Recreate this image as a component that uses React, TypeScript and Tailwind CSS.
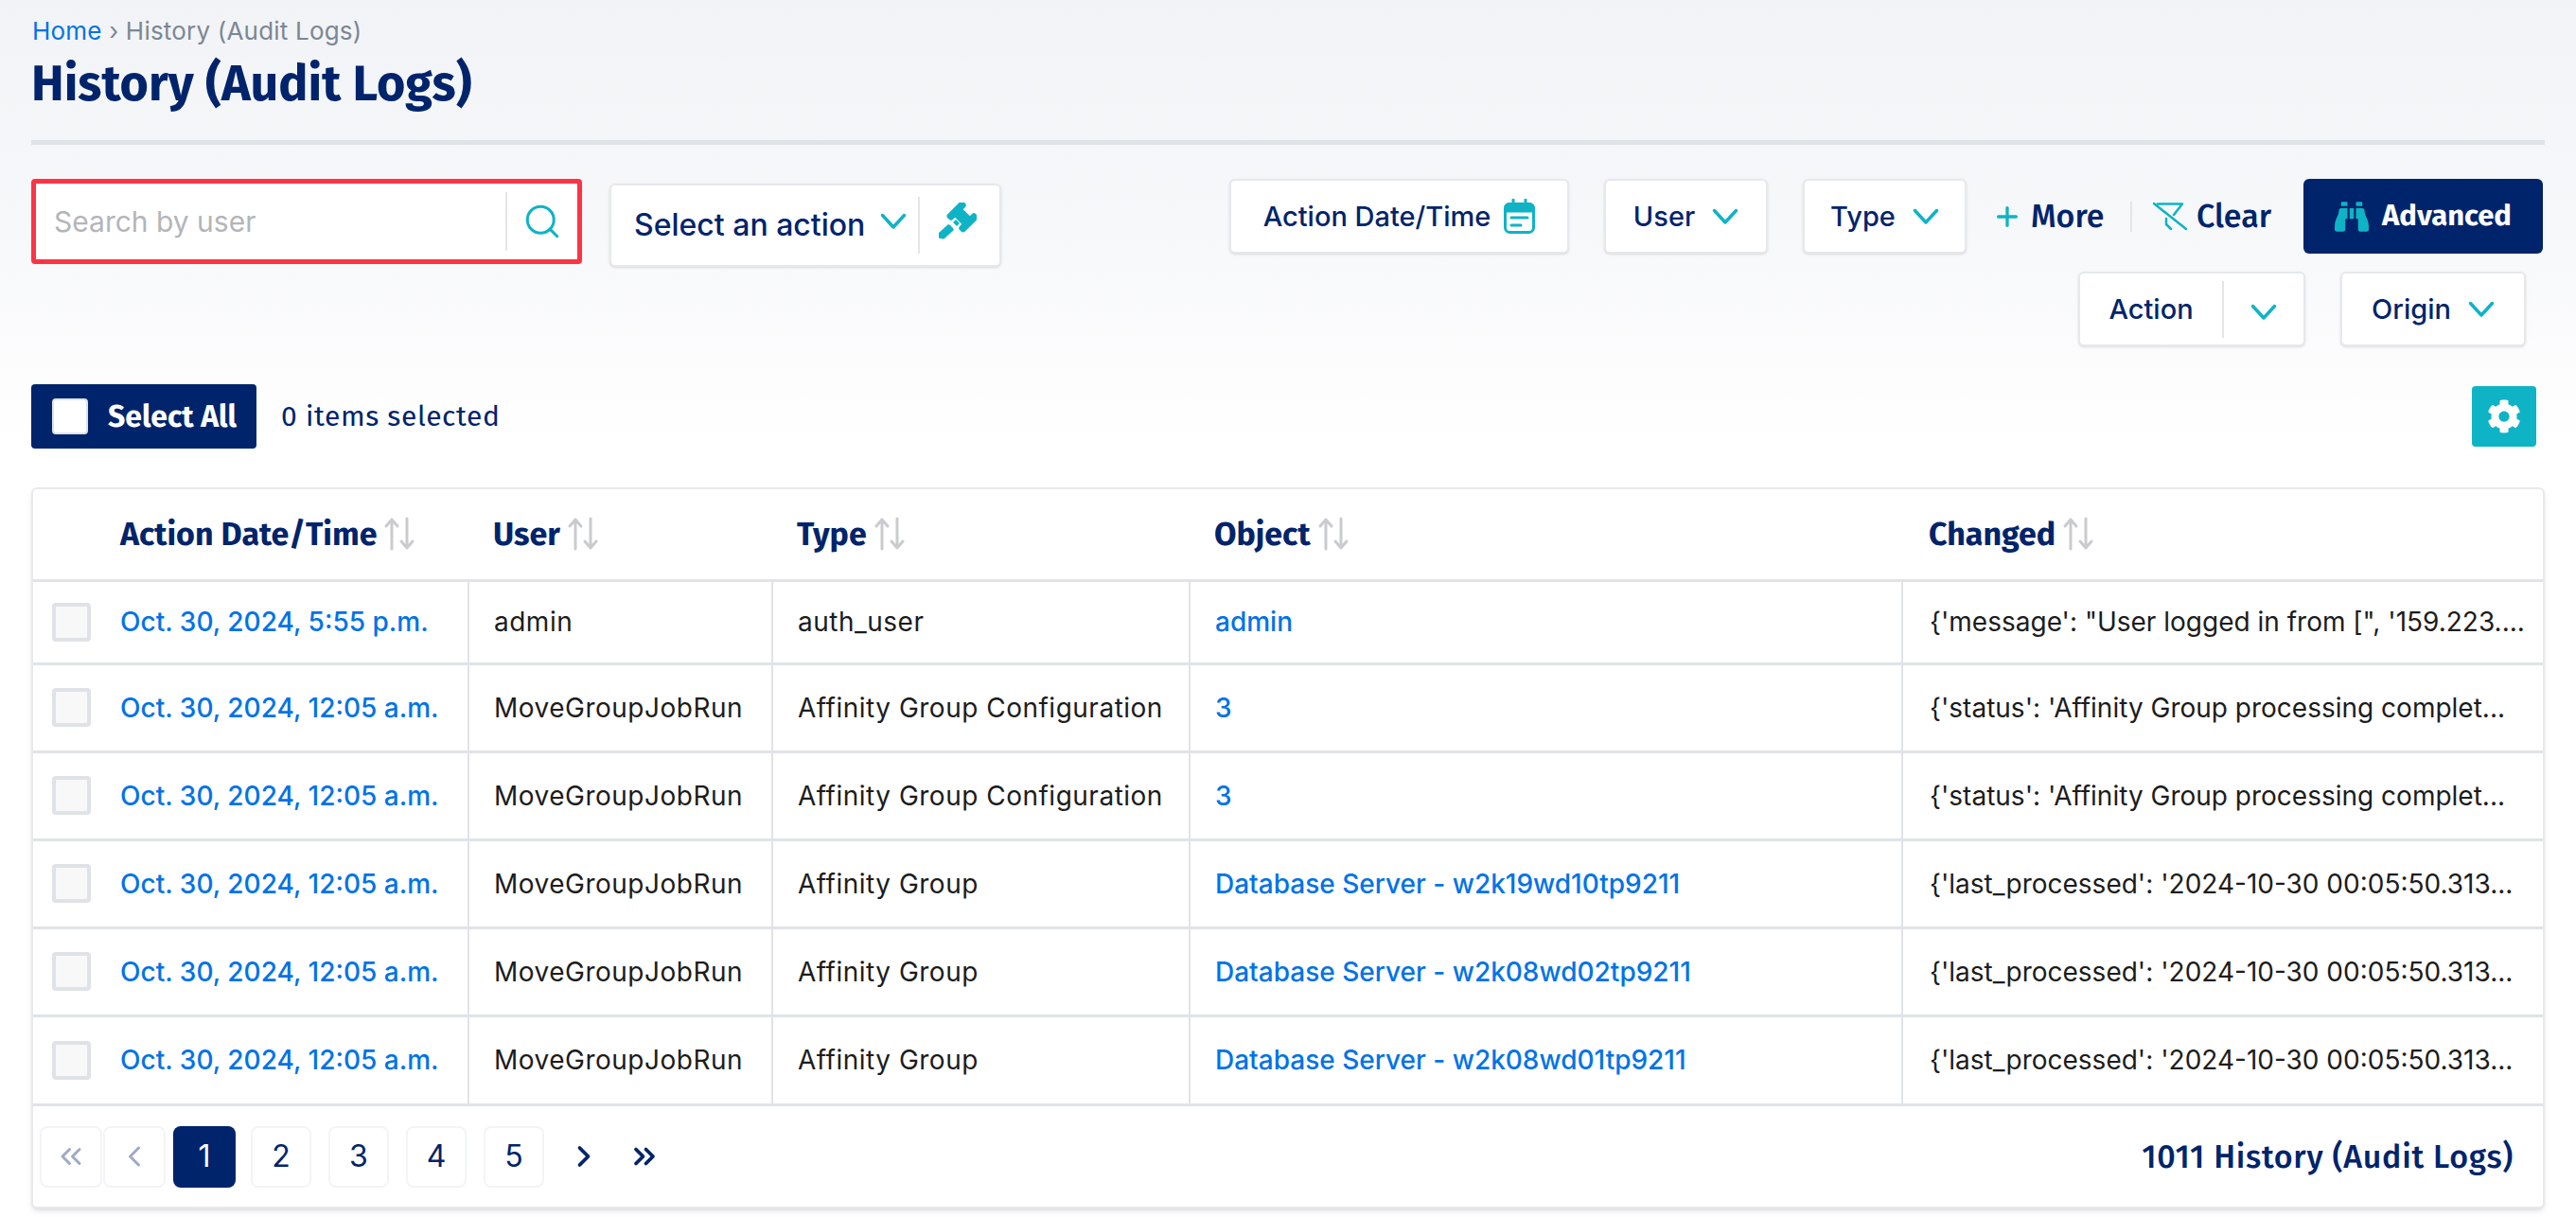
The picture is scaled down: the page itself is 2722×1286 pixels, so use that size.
import { Search, Plus, ChevronLeft, ChevronRight, ChevronsLeft, ChevronsRight } from 'lucide-react';
import { FaBinoculars, FaCog } from 'react-icons/fa';

const headFont = "font-['Fira_Sans','Noto_Sans',sans-serif]";

interface LogRow {
  date: string;
  user: string;
  type: string;
  object: string;
  changed: string;
}

const rows: LogRow[] = [
  { date: 'Oct. 30, 2024, 5:55 p.m.', user: 'admin', type: 'auth_user', object: 'admin', changed: `{'message': "User logged in from [", '159.223....` },
  { date: 'Oct. 30, 2024, 12:05 a.m.', user: 'MoveGroupJobRun', type: 'Affinity Group Configuration', object: '3', changed: `{'status': 'Affinity Group processing complet...` },
  { date: 'Oct. 30, 2024, 12:05 a.m.', user: 'MoveGroupJobRun', type: 'Affinity Group Configuration', object: '3', changed: `{'status': 'Affinity Group processing complet...` },
  { date: 'Oct. 30, 2024, 12:05 a.m.', user: 'MoveGroupJobRun', type: 'Affinity Group', object: 'Database Server - w2k19wd10tp9211', changed: `{'last_processed': '2024-10-30 00:05:50.313...` },
  { date: 'Oct. 30, 2024, 12:05 a.m.', user: 'MoveGroupJobRun', type: 'Affinity Group', object: 'Database Server - w2k08wd02tp9211', changed: `{'last_processed': '2024-10-30 00:05:50.313...` },
  { date: 'Oct. 30, 2024, 12:05 a.m.', user: 'MoveGroupJobRun', type: 'Affinity Group', object: 'Database Server - w2k08wd01tp9211', changed: `{'last_processed': '2024-10-30 00:05:50.313...` },
];

const Chevron = () => (
  <svg viewBox="0 0 28 18" className="w-[28px] h-[18px]" fill="none" stroke="#0fb3c6" strokeWidth="3.5" strokeLinecap="round" strokeLinejoin="round">
    <path d="M2.5 2.5 14 15 25.500 2.500" />
  </svg>
);

const FilterBtn = ({ label, className }: { label: string; className: string }) => (
  <button className={`h-[79px] bg-white rounded-md border-2 border-[#e6e8ec] shadow-sm flex items-center justify-center gap-[18px] text-[29px] font-medium text-[#00246b] ${className}`}>
    {label}
    <Chevron />
  </button>
);

const SortArrows = () => (
  <svg viewBox="0 0 36 36" className="w-[36px] h-[36px] ml-[6px]" fill="none" stroke="#c9cbce" strokeWidth="3" strokeLinecap="round" strokeLinejoin="round">
    <path d="M10 34V3M4 10l6-7 6 7" />
    <path d="M26 2v31M20 26l6 7 6-7" />
  </svg>
);

const SortHead = ({ label }: { label: string }) => (
  <div className={`flex items-center text-[34px] font-bold text-[#00246b] ${headFont}`}>
    {label}
    <SortArrows />
  </div>
);

const PageBtn = ({ children, active, wide }: { children: React.ReactNode; active?: boolean; wide?: boolean }) => (
  <button className={`${wide ? 'w-[66px]' : 'w-[64px]'} h-[65px] rounded-lg flex items-center justify-center text-[32px] ${active ? 'bg-[#00246b] text-white' : 'bg-white border-2 border-[#f3f4f6] text-[#00246b]'}`}>
    {children}
  </button>
);

export default function App() {
  return (
    <div className="min-h-[1286px] bg-[linear-gradient(#f2f3f6_0px,#f7f8fa_250px,#ffffff_480px)] px-[33px] pt-[18px] font-['Inter',sans-serif]">
      <div className="text-[26px] leading-[30px] tracking-[0.2px] text-[#7b8794] ml-[1px]">
        <span className="text-[#0073e6]">Home</span> › History (Audit Logs)
      </div>
      <h1 className={`text-[52px] leading-[62px] mt-[10px] font-bold text-[#00246b] ${headFont}`}>History (Audit Logs)</h1>
      <div className="h-[5px] bg-[#dfe2e6] mt-[28px]" />

      <div className="flex justify-between items-start mt-[36px]">
        <div className="flex gap-[29px] items-start">
          <div className="w-[582px] h-[90px] border-[5px] border-[#fb3446] rounded bg-white flex items-center">
            <input placeholder="Search by user" className="flex-1 min-w-0 pl-[19px] text-[30px] outline-none placeholder:text-[#b3b5b9]" />
            <div className="w-[2px] h-[62px] bg-[#e3e5e8]" />
            <Search className="w-[42px] h-[42px] mx-[16px] text-[#0fb3c6]" strokeWidth={1.75} />
          </div>
          <div className="w-[414px] h-[88px] mt-[5px] bg-white rounded-md border-2 border-[#e6e8ec] shadow-sm flex items-center pl-[24px] text-[32px] font-medium text-[#00246b]">
            Select an action
            <span className="ml-[16px] -mt-[8px]"><Chevron /></span>
            <div className="w-[2px] h-[60px] bg-[#e3e5e8] ml-[12px]" />
            <svg viewBox="0 0 40 40" className="w-[40px] h-[40px] ml-[20px] -mt-[8px]" fill="#0fb3c6">
              <g transform="rotate(45 25 15)">
                <rect x="16" y="9" width="18" height="12" />
                <rect x="12" y="3" width="8" height="24" rx="3" />
                <rect x="30" y="3" width="8" height="24" rx="3" />
              </g>
              <path d="M3 38a3.5 3.5 0 0 1-3-6l10-9 2 1 3 3 1 2-9 8a3 3 0 0 1-4 1zM15 21l3-3 4 4-3 3z" />
            </svg>
          </div>
        </div>
        <div className="flex flex-col items-end mr-[2px]">
          <div className="flex items-center">
            <button className="w-[359px] h-[79px] bg-white rounded-md border-2 border-[#e6e8ec] shadow-sm flex items-center justify-center gap-[14px] text-[29px] font-medium text-[#00246b]">
              Action Date/Time
              <svg viewBox="0 0 33 37" className="w-[33px] h-[37px]" fill="none" stroke="#0fb3c6" strokeWidth="3" strokeLinecap="round">
                <rect x="1.5" y="5.5" width="30" height="30" rx="5" />
                <path d="M1.500 10a4.500 4.500 0 0 1 4.500-4.500h21a4.500 4.500 0 0 1 4.500 4.500v3h-30z" fill="#0fb3c6" />
                <path d="M10 1v5M23 1v5M8 20h17M8 28h10" />
              </svg>
            </button>
            <FilterBtn label="User" className="w-[173px] ml-[37px]" />
            <FilterBtn label="Type" className="w-[173px] ml-[37px]" />
            <div className={`flex items-center ml-[27px] text-[34px] font-medium text-[#00246b] w-[146px] ${headFont}`}>
              <Plus className="w-[32px] h-[32px] text-[#0fb3c6]" strokeWidth={2.5} />
              <span className="ml-[9px]">More</span>
            </div>
            <div className="w-[2px] h-[32px] bg-[#e3e5e8]" />
            <div className={`flex items-center ml-[22px] w-[159px] text-[34px] font-medium text-[#00246b] ${headFont}`}>
              <svg viewBox="0 0 36 30" className="w-[36px] h-[30px]" fill="none" stroke="#0fb3c6" strokeWidth="2.5" strokeLinecap="round" strokeLinejoin="round">
                <path d="M1 1l34 27M5 1.500h26L22 13M14 17v6l5 5" />
              </svg>
              <span className="ml-[10px]">Clear</span>
            </div>
            <button className={`w-[253px] h-[79px] bg-[#00246b] rounded-md flex items-center justify-center gap-[14px] text-[31px] font-bold text-white ${headFont}`}>
              <FaBinoculars className="w-[36px] h-[36px] text-[#0fb3c6]" />
              Advanced
            </button>
          </div>
          <div className="flex items-center mt-[19px] mr-[18px]">
            <div className="w-[240px] h-[79px] bg-white rounded-md border-2 border-[#e6e8ec] shadow-sm flex items-center text-[29px] font-medium text-[#00246b]">
              <span className="w-[150px] text-center">Action</span>
              <div className="w-[2px] h-[60px] bg-[#e3e5e8]" />
              <span className="flex-1 flex justify-center pt-[6px]"><Chevron /></span>
            </div>
            <FilterBtn label="Origin" className="w-[196px] ml-[37px]" />
          </div>
        </div>
      </div>

      <div className="flex justify-between items-center mt-[40px]">
        <div className="flex items-center">
          <button className={`w-[238px] h-[68px] bg-[#00246b] rounded flex items-center pl-[22px] text-[32px] font-bold text-white ${headFont}`}>
            <span className="w-[38px] h-[38px] rounded bg-white border-2 border-[#dfe2e6] mr-[21px]" />
            Select All
          </button>
          <span className={`ml-[26px] text-[30px] tracking-[0.6px] text-[#00246b] ${headFont}`}>0 items selected</span>
        </div>
        <button className="w-[68px] h-[64px] mr-[9px] bg-[#0fb3c6] rounded flex items-center justify-center">
          <FaCog className="w-[36px] h-[36px] text-white" />
        </button>
      </div>

      <div className="mt-[41px] bg-white rounded-md border-2 border-[#e8e9ec] shadow-md">
        <table className="w-full table-fixed border-collapse">
          <colgroup>
            <col className="w-[92px]" />
            <col className="w-[368px]" />
            <col className="w-[321px]" />
            <col className="w-[441px]" />
            <col className="w-[753px]" />
            <col />
          </colgroup>
          <thead>
            <tr className="h-[96px]">
              <th />
              <th className="text-left font-normal"><SortHead label="Action Date/Time" /></th>
              <th className="text-left font-normal pl-[26px]"><SortHead label="User" /></th>
              <th className="text-left font-normal pl-[26px]"><SortHead label="Type" /></th>
              <th className="text-left font-normal pl-[26px]"><SortHead label="Object" /></th>
              <th className="text-left font-normal pl-[28px]"><SortHead label="Changed" /></th>
            </tr>
          </thead>
          <tbody>
            {rows.map((row, i) => (
              <tr key={i} className={`${i === 0 ? 'h-[88px]' : 'h-[93px]'} border-t-[3px] border-[#e0e3e8] text-[28px] text-[#1c1c1c]`}>
                <td className="pl-[20px]">
                  <span className="block w-[41px] h-[41px] rounded bg-[#f8f8f9] border-[4px] border-[#dfe2e6]" />
                </td>
                <td className="text-[#0073e6] font-medium border-r-2 border-[#e0e3e8] whitespace-nowrap">{row.date}</td>
                <td className="pl-[26px] tracking-[0.5px] border-r-2 border-[#e0e3e8] whitespace-nowrap">{row.user}</td>
                <td className="pl-[26px] tracking-[0.5px] border-r-2 border-[#e0e3e8] whitespace-nowrap">{row.type}</td>
                <td className="pl-[26px] border-r-2 border-[#e0e3e8] text-[#0073e6] font-medium whitespace-nowrap">{row.object}</td>
                <td className="pl-[28px] whitespace-nowrap">{row.changed}</td>
              </tr>
            ))}
          </tbody>
        </table>
        <div className="h-[109px] border-t-[3px] border-[#e0e3e8] flex items-center justify-between pl-[7px] pr-[31px]">
          <div className="flex items-center">
            <PageBtn wide><ChevronsLeft className="w-[36px] h-[36px] text-[#9eaac6]" /></PageBtn>
            <div className="ml-[1px]"><PageBtn wide><ChevronLeft className="w-[36px] h-[36px] text-[#9eaac6]" /></PageBtn></div>
            <div className="ml-[8px]"><PageBtn wide active>1</PageBtn></div>
            <div className="ml-[16px]"><PageBtn>2</PageBtn></div>
            <div className="ml-[18px]"><PageBtn>3</PageBtn></div>
            <div className="ml-[18px]"><PageBtn>4</PageBtn></div>
            <div className="ml-[18px]"><PageBtn>5</PageBtn></div>
            <ChevronRight className="w-[36px] h-[36px] ml-[24px] text-[#00246b]" strokeWidth={2.5} />
            <ChevronsRight className="w-[36px] h-[36px] ml-[28px] text-[#00246b]" strokeWidth={2.5} />
          </div>
          <span className={`text-[34px] font-medium tracking-[0.7px] text-[#00246b] ${headFont}`}>1011 History (Audit Logs)</span>
        </div>
      </div>
    </div>
  );
}
